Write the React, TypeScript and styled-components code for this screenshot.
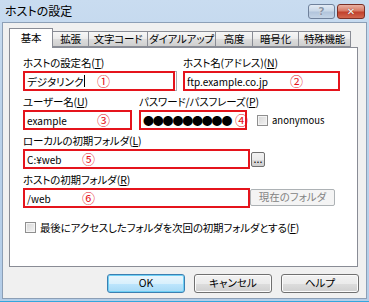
import * as React from "react";
import styled, { createGlobalStyle } from "styled-components";

const GlobalStyle = createGlobalStyle`
    html, body {
        margin: 0;
        padding: 0;
    }
    body {
        width: 369px;
        height: 302px;
        overflow: hidden;
        background: #ffffff;
        font-family: "Noto Sans CJK JP", "Noto Sans", sans-serif;
        font-feature-settings: "palt";
    }
`;

const Window = styled.div`
    width: 369px;
    height: 302px;
    box-sizing: border-box;
    display: flex;
    flex-direction: column;
    padding: 0 2px 2px 2px;
    background: linear-gradient(#c9dcf0, #b9d1ea 40%, #b4cde8);
    border-bottom: 1px solid #34a6dd;
`;

const TitleBar = styled.div`
    height: 22px;
    display: flex;
    align-items: flex-start;
    padding-left: 3px;
`;

const Title = styled.div`
    font-size: 12px;
    line-height: 22px;
    color: #000;
`;

const CaptionButtons = styled.div`
    margin-left: auto;
    margin-right: 2px;
    margin-top: 4px;
    display: flex;
    gap: 2px;
`;

const CaptionButton = styled.div<{ $close?: boolean }>`
    width: ${p => (p.$close ? 28 : 27)}px;
    height: 15px;
    box-sizing: border-box;
    border-radius: 3px;
    border: 1px solid ${p => (p.$close ? "#7a2f25" : "#6f819b")};
    background: ${p =>
        p.$close
            ? "linear-gradient(#eab2a3, #d77a66 45%, #c1402c 55%, #d2674f)"
            : "linear-gradient(#e3ebf5, #cad8e8 45%, #b2c5dc 55%, #c4d4e6)"};
    display: flex;
    align-items: center;
    justify-content: center;
    font-family: "DejaVu Sans", sans-serif;
    font-weight: bold;
    font-size: ${p => (p.$close ? 10 : 11)}px;
    line-height: 1;
    color: ${p => (p.$close ? "#ffffff" : "#8a96a6")};
    text-shadow: ${p => (p.$close ? "0 0 1px #5a1a10" : "0 0 1px #ffffff")};
`;

const Client = styled.div`
    flex: 1;
    display: flex;
    flex-direction: column;
    background: #f0f0f0;
    border: 1px solid #8c9fb6;
    padding: 5px 7px 0 6px;
`;

const TabStrip = styled.div`
    height: 19px;
    display: flex;
    align-items: flex-end;
    position: relative;
    z-index: 1;
`;

const Tab = styled.div<{ $w: number; $active?: boolean }>`
    width: ${p => p.$w}px;
    height: ${p => (p.$active ? 20 : 16)}px;
    margin-bottom: ${p => (p.$active ? -1 : 0)}px;
    box-sizing: border-box;
    border: 1px solid #898c95;
    border-bottom: ${p => (p.$active ? "none" : "1px solid #898c95")};
    margin-right: -1px;
    background: ${p => (p.$active ? "#ffffff" : "linear-gradient(#f7f7f7, #ebebeb 50%, #dddddd 51%, #cfcfcf)")};
    display: flex;
    align-items: center;
    justify-content: center;
    padding-top: ${p => (p.$active ? 0 : 1)}px;
    font-size: 10.5px;
    letter-spacing: -0.2px;
    line-height: 1;
    white-space: nowrap;
    color: #000;
`;

const Panel = styled.div`
    width: 349px;
    height: 220px;
    box-sizing: border-box;
    background: #ffffff;
    border: 1px solid #898c95;
    padding: 8px 0 0 13px;
    display: flex;
    flex-direction: column;
    gap: 4px;
`;

const Row = styled.div<{ $gap?: number }>`
    display: flex;
    align-items: flex-end;
    gap: ${p => p.$gap ?? 6}px;
`;

const Group = styled.div<{ $w: number }>`
    width: ${p => p.$w}px;
    display: flex;
    flex-direction: column;
    gap: 1px;
`;

const Label = styled.div`
    height: 14px;
    font-size: 10.5px;
    letter-spacing: -0.15px;
    line-height: 14px;
    color: #000;
    white-space: nowrap;
`;

const Field = styled.div`
    position: relative;
    height: 20px;
    box-sizing: border-box;
    border: 1px solid #abadb3;
    background: #fff;
    display: flex;
    align-items: center;
    padding-left: 3px;
    font-size: 10.5px;
    color: #000;
    white-space: nowrap;
    overflow: visible;
`;

const Latin = styled.span`
    font-size: 10px;
`;

const Mark = styled.div<{ $cut?: number }>`
    position: absolute;
    top: -1px;
    left: -1px;
    bottom: -1px;
    right: ${p => (p.$cut ?? 0) - 1}px;
    border: 2px solid #e5141c;
    pointer-events: none;
`;

const Num = styled.span<{ $x: number }>`
    position: absolute;
    left: ${p => p.$x}px;
    top: 50%;
    transform: translateY(-52%);
    font-size: 13px;
    line-height: 1;
    color: #e5141c;
`;

const Caret = styled.span`
    display: inline-block;
    width: 1px;
    height: 12px;
    background: #000;
    margin-left: 1px;
`;

const Dots = styled.span`
    font-size: 11px;
    letter-spacing: -1.2px;
    line-height: 1;
    color: #000;
`;

const CheckLine = styled.label<{ $ml?: number; $mt?: number }>`
    display: flex;
    align-items: center;
    gap: 4px;
    margin-left: ${p => p.$ml ?? 0}px;
    margin-top: ${p => p.$mt ?? 0}px;
    height: 20px;
    color: #000;
    white-space: nowrap;
`;

const CheckText = styled.span<{ $latin?: boolean }>`
    font-size: ${p => (p.$latin ? 9.5 : 10.5)}px;
    letter-spacing: ${p => (p.$latin ? 0 : -0.15)}px;
`;

const Box = styled.span`
    width: 11px;
    height: 11px;
    box-sizing: border-box;
    border: 1px solid #8f8f8f;
    background: linear-gradient(135deg, #d6d6d6, #f4f4f4);
    box-shadow: inset 0 0 0 1px #f4f4f4;
`;

const SmallButton = styled.div<{ $w: number; $h: number; $disabled?: boolean }>`
    width: ${p => p.$w}px;
    height: ${p => p.$h}px;
    box-sizing: border-box;
    margin-bottom: 2px;
    border: 1px solid ${p => (p.$disabled ? "#adb2b5" : "#707070")};
    border-radius: 2px;
    background: ${p => (p.$disabled ? "#f4f4f4" : "linear-gradient(#f2f2f2, #ebebeb 50%, #dddddd 51%, #cfcfcf)")};
    display: flex;
    align-items: center;
    justify-content: center;
    font-size: 10.5px;
    line-height: 1;
    white-space: nowrap;
    color: ${p => (p.$disabled ? "#838383" : "#000")};
`;

const Buttons = styled.div`
    display: flex;
    justify-content: flex-end;
    gap: 9px;
    margin-top: 7px;
`;

const Button = styled.div<{ $default?: boolean }>`
    width: 78px;
    height: 19px;
    box-sizing: border-box;
    border: 1px solid ${p => (p.$default ? "#3c7fb1" : "#707070")};
    border-radius: 3px;
    background: ${p =>
        p.$default
            ? "linear-gradient(#eaf6fd, #d9f0fc 50%, #bee6fd 51%, #a7d9f5)"
            : "linear-gradient(#f2f2f2, #ebebeb 50%, #dddddd 51%, #cfcfcf)"};
    box-shadow: ${p => (p.$default ? "inset 0 0 0 1px #6fd0f5" : "inset 0 0 0 1px #fcfcfc")};
    display: flex;
    align-items: center;
    justify-content: center;
    font-size: 10.5px;
    line-height: 1;
    color: #000;
`;

const tabs = [
    { name: "基本", w: 44 },
    { name: "拡張", w: 37 },
    { name: "文字コード", w: 60 },
    { name: "ダイアルアップ", w: 69 },
    { name: "高度", w: 38 },
    { name: "暗号化", w: 47 },
    { name: "特殊機能", w: 53 }
];

export default function App() {
    return (
        <>
            <GlobalStyle />
            <Window>
                <TitleBar>
                    <Title>ホストの設定</Title>
                    <CaptionButtons>
                        <CaptionButton>?</CaptionButton>
                        <CaptionButton $close>✕</CaptionButton>
                    </CaptionButtons>
                </TitleBar>
                <Client>
                    <TabStrip>
                        {tabs.map((t, i) => (
                            <Tab key={t.name} $w={t.w} $active={i === 0}>
                                {t.name}
                            </Tab>
                        ))}
                    </TabStrip>
                    <Panel>
                        <Row $gap={6}>
                            <Group $w={154}>
                                <Label>
                                    ホストの設定名(<u>T</u>)
                                </Label>
                                <Field>
                                    デジタリンク
                                    <Caret />
                                    <Num $x={73}>①</Num>
                                    <Mark $cut={2} />
                                </Field>
                            </Group>
                            <Group $w={157}>
                                <Label>
                                    ホスト名(アドレス)(<u>N</u>)
                                </Label>
                                <Field>
                                    <Latin>ftp.example.co.jp</Latin>
                                    <Num $x={106}>②</Num>
                                    <Mark />
                                </Field>
                            </Group>
                        </Row>
                        <Row $gap={7}>
                            <Group $w={109}>
                                <Label>
                                    ユーザー名(<u>U</u>)
                                </Label>
                                <Field>
                                    <Latin>example</Latin>
                                    <Num $x={73}>③</Num>
                                    <Mark />
                                </Field>
                            </Group>
                            <Group $w={108}>
                                <Label>
                                    パスワード/パスフレーズ(<u>P</u>)
                                </Label>
                                <Field>
                                    <Dots>●●●●●●●●●</Dots>
                                    <Num $x={95}>④</Num>
                                    <Mark />
                                </Field>
                            </Group>
                            <CheckLine $ml={3}>
                                <Box />
                                <CheckText $latin>anonymous</CheckText>
                            </CheckLine>
                        </Row>
                        <Row $gap={1}>
                            <Group $w={227}>
                                <Label>
                                    ローカルの初期フォルダ(<u>L</u>)
                                </Label>
                                <Field>
                                    <Latin>C:¥web</Latin>
                                    <Num $x={58}>⑤</Num>
                                    <Mark />
                                </Field>
                            </Group>
                            <SmallButton $w={14} $h={15}>...</SmallButton>
                        </Row>
                        <Row $gap={0}>
                            <Group $w={227}>
                                <Label>
                                    ホストの初期フォルダ(<u>R</u>)
                                </Label>
                                <Field>
                                    <Latin>/web</Latin>
                                    <Num $x={58}>⑥</Num>
                                    <Mark />
                                </Field>
                            </Group>
                            <SmallButton $w={85} $h={17} $disabled>
                                現在のフォルダ
                            </SmallButton>
                        </Row>
                        <CheckLine $ml={2} $mt={5}>
                            <Box />
                            <CheckText>
                                最後にアクセスしたフォルダを次回の初期フォルダとする(<u>F</u>)
                            </CheckText>
                        </CheckLine>
                    </Panel>
                    <Buttons>
                        <Button $default>OK</Button>
                        <Button>キャンセル</Button>
                        <Button>ヘルプ</Button>
                    </Buttons>
                </Client>
            </Window>
        </>
    );
}
